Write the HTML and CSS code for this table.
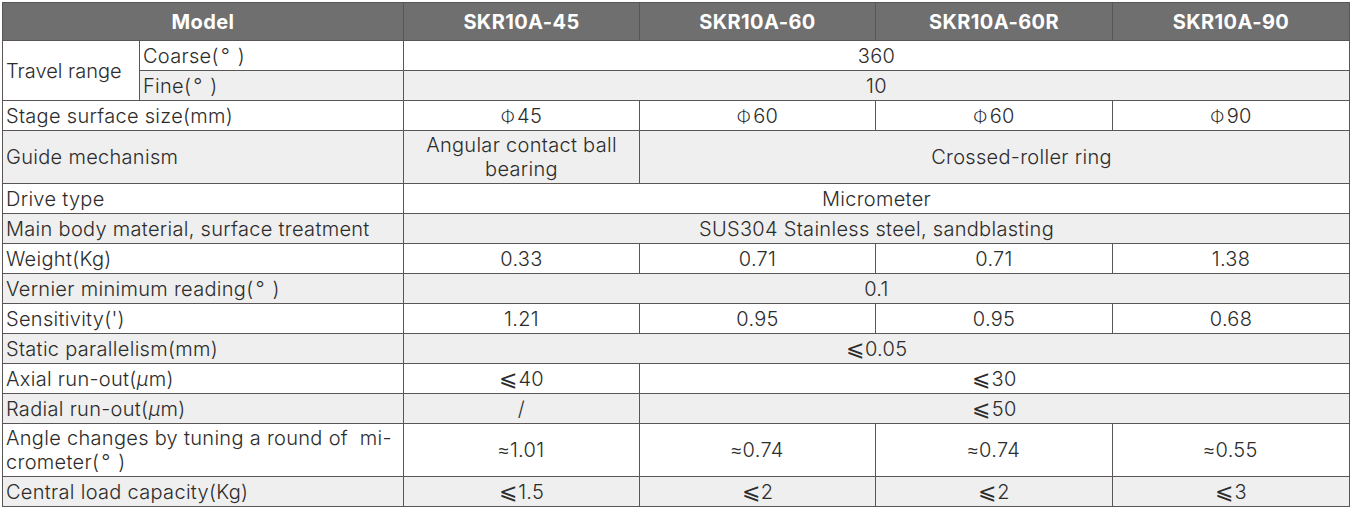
FILE: index.html
```html
<!DOCTYPE html>
<html lang="en">
<head>
<meta charset="utf-8">
<title>SKR10A specifications</title>
<link rel="stylesheet" href="styles.css">
</head>
<body>
<table class="spec">
  <colgroup>
    <col class="c-a"><col class="c-b"><col class="c-d"><col class="c-d"><col class="c-d2"><col class="c-d2">
  </colgroup>
  <thead>
    <tr class="head">
      <th colspan="2">Model</th>
      <th>SKR10A-45</th>
      <th>SKR10A-60</th>
      <th>SKR10A-60R</th>
      <th>SKR10A-90</th>
    </tr>
  </thead>
  <tbody>
    <tr class="r w">
      <td class="lbl tr" rowspan="2">Travel range</td>
      <td class="lbl sub">Coarse(<span class="deg">°</span>)</td>
      <td colspan="4">360</td>
    </tr>
    <tr class="r g">
      <td class="lbl sub">Fine(<span class="deg">°</span>)</td>
      <td colspan="4">10</td>
    </tr>
    <tr class="r w">
      <td class="lbl" colspan="2">Stage surface size(mm)</td>
      <td><span class="phi">Φ</span>45</td>
      <td><span class="phi">Φ</span>60</td>
      <td><span class="phi">Φ</span>60</td>
      <td><span class="phi">Φ</span>90</td>
    </tr>
    <tr class="r2 g">
      <td class="lbl" colspan="2">Guide mechanism</td>
      <td class="two">Angular contact ball<br>bearing</td>
      <td class="shift" colspan="3">Crossed-roller ring</td>
    </tr>
    <tr class="r w">
      <td class="lbl" colspan="2">Drive type</td>
      <td colspan="4">Micrometer</td>
    </tr>
    <tr class="r g">
      <td class="lbl" colspan="2">Main body material, surface treatment</td>
      <td colspan="4">SUS304 Stainless steel, sandblasting</td>
    </tr>
    <tr class="r w">
      <td class="lbl" colspan="2">Weight(Kg)</td>
      <td>0.33</td>
      <td>0.71</td>
      <td>0.71</td>
      <td>1.38</td>
    </tr>
    <tr class="r g">
      <td class="lbl" colspan="2">Vernier minimum reading(<span class="deg">°</span>)</td>
      <td colspan="4">0.1</td>
    </tr>
    <tr class="r w">
      <td class="lbl" colspan="2">Sensitivity(')</td>
      <td>1.21</td>
      <td>0.95</td>
      <td>0.95</td>
      <td>0.68</td>
    </tr>
    <tr class="r g">
      <td class="lbl" colspan="2">Static parallelism(mm)</td>
      <td colspan="4"><span class="le">⩽</span>0.05</td>
    </tr>
    <tr class="r w">
      <td class="lbl" colspan="2">Axial run-out(<span class="mu">μ</span>m)</td>
      <td><span class="le">⩽</span>40</td>
      <td colspan="3"><span class="le">⩽</span>30</td>
    </tr>
    <tr class="r g">
      <td class="lbl" colspan="2">Radial run-out(<span class="mu">μ</span>m)</td>
      <td>/</td>
      <td colspan="3"><span class="le">⩽</span>50</td>
    </tr>
    <tr class="r2 w">
      <td class="lbl two" colspan="2">Angle changes by tuning a round of&nbsp; mi-<br>crometer(<span class="deg">°</span>)</td>
      <td><span class="ap">≈</span>1.01</td>
      <td><span class="ap">≈</span>0.74</td>
      <td><span class="ap">≈</span>0.74</td>
      <td><span class="ap">≈</span>0.55</td>
    </tr>
    <tr class="r g">
      <td class="lbl" colspan="2">Central load capacity(Kg)</td>
      <td><span class="le">⩽</span>1.5</td>
      <td><span class="le">⩽</span>2</td>
      <td><span class="le">⩽</span>2</td>
      <td><span class="le">⩽</span>3</td>
    </tr>
  </tbody>
</table>
</body>
</html>
```

FILE: styles.css
```css
html, body {
  margin: 0;
  background: #ffffff;
}
body {
  padding: 2px;
  font-family: Inter, Roboto, "Liberation Sans", sans-serif;
  color: #2c2c2c;
}
.spec {
  border-collapse: collapse;
  table-layout: fixed;
  width: 1347px;
  font-size: 20px;
  font-weight: 300;
  letter-spacing: 0.3px;
}
.c-a { width: 137px; }
.c-b { width: 264px; }
.c-d { width: 236px; }
.c-d2 { width: 237px; }
.spec th, .spec td {
  border: 1px solid #5b5656;
  padding: 0;
  text-align: center;
  vertical-align: middle;
  line-height: 22px;
  white-space: nowrap;
}
.head th {
  background: #6f6f6f;
  color: #ffffff;
  font-weight: 700;
  font-size: 20px;
  letter-spacing: 0.4px;
  height: 37px;
}
.r td { height: 29px; }
.r2 td { height: 52px; }
.spec td.two { line-height: 24px; }
.spec td.shift { padding-left: 54px; }
.w td { background: #ffffff; }
.g td { background: #efefef; }
.spec td.lbl {
  text-align: left;
  padding-left: 3px;
}
.spec td.tr { letter-spacing: 0; }
.deg {
  display: inline-block;
  width: 17px;
  text-align: left;
  padding-left: 2px;
}
.phi {
  font-family: "Noto Sans CJK SC", "DejaVu Sans", sans-serif;
  font-size: 18px;
  margin-right: 2px;
}
.le {
  font-family: "DejaVu Sans", sans-serif;
  font-size: 22px;
  margin-right: 1px;
}
.ap {
  font-family: "DejaVu Sans", sans-serif;
  font-size: 18px;
  margin-right: 1px;
}
.mu { font-style: italic; }
```
